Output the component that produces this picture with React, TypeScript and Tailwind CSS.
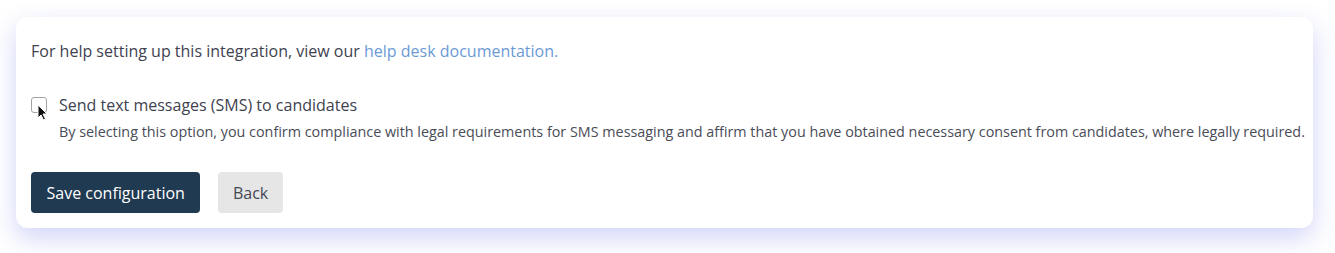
import React from "react";

export default function App() {
  return (
    <div className="min-h-[253px] w-full bg-white pl-4 pr-[22px] pt-[17px] pb-6 font-['Open_Sans',sans-serif]">
      <div className="rounded-xl bg-white pl-[15px] pr-[4px] pt-[22px] pb-[15px] shadow-[0_10px_26px_rgba(110,120,230,0.32)]">
        <p className="text-[16px] leading-[24px] text-[#40424f]">
          For help setting up this integration, view our{" "}
          <a href="#" className="text-[#6b9ad6]">
            help desk documentation.
          </a>
        </p>

        <div className="mt-[30px] flex items-start gap-3">
          <div className="relative mt-[4px] shrink-0">
            <input
              type="checkbox"
              className="block h-4 w-4 appearance-none rounded-[3px] border border-[#a3a3a3] bg-white"
            />
            <svg
              className="pointer-events-none absolute left-[6px] top-[7px]"
              width="11"
              height="17"
              viewBox="0 0 11 17"
            >
              <path
                d="M1 1 L1 14 L4 11 L6.5 16 L8.5 15 L6 10 L10 10 Z"
                fill="#111"
                stroke="#fff"
                strokeWidth="1"
              />
            </svg>
          </div>
          <div className="min-w-0">
            <div className="text-[16px] leading-[24px] text-[#40424f]">
              Send text messages (SMS) to candidates
            </div>
            <div className="mt-[5px] whitespace-nowrap text-[14.35px] leading-[20px] text-[#4a4c58]">
              By selecting this option, you confirm compliance with legal requirements for SMS messaging and affirm that you have obtained necessary consent from candidates, where legally required.
            </div>
          </div>
        </div>

        <div className="mt-[30px] flex items-center gap-[18px]">
          <button className="h-[41px] rounded-[4px] bg-[#203a52] px-[15.5px] text-[16px] text-white">
            Save configuration
          </button>
          <button className="h-[41px] rounded-[4px] bg-[#e6e6e6] px-[14.5px] text-[16px] text-[#444654]">
            Back
          </button>
        </div>
      </div>
    </div>
  );
}
